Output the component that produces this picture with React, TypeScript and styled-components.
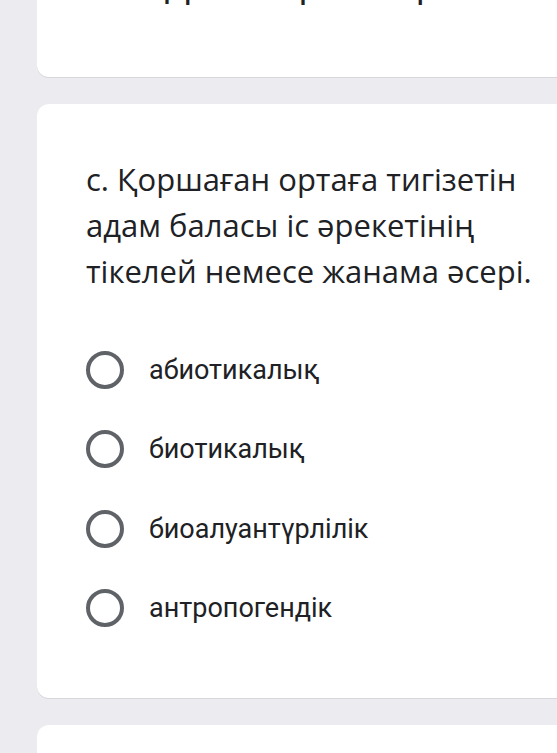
import styled, { createGlobalStyle } from 'styled-components';

const GlobalStyle = createGlobalStyle`
  html, body {
    margin: 0;
    padding: 0;
    background: #ebebf0;
  }
  body {
    font-family: Roboto, "Liberation Sans", sans-serif;
    color: #202124;
  }
`;

const options = ['абиотикалық', 'биотикалық', 'биоалуантүрлілік', 'антропогендік'];

function App() {
  return (
    <>
      <GlobalStyle />
      <Page>
        <PrevCard>
          <PrevText>Қоршаған ортаға әсері</PrevText>
        </PrevCard>
        <Card>
          <Question>
            с. Қоршаған ортаға тигізетін адам баласы іс әрекетінің тікелей немесе жанама әсері.
          </Question>
          <OptionList>
            {options.map((label) => (
              <Option key={label}>
                <Radio />
                <OptionLabel>{label}</OptionLabel>
              </Option>
            ))}
          </OptionList>
        </Card>
        <Card />
      </Page>
    </>
  );
}

const Page = styled.div`
  width: 557px;
  height: 753px;
  overflow: hidden;
  padding-left: 37px;
  box-sizing: border-box;
  display: flex;
  flex-direction: column;
  gap: 27px;
`;

const Card = styled.div`
  flex-shrink: 0;
  width: 540px;
  min-height: 100px;
  background: #fff;
  border-radius: 12px;
  box-shadow: 0 1px 0 #d6d6dc;
  padding: 52px 0 50px 49px;
  box-sizing: border-box;
`;

const PrevCard = styled(Card)`
  min-height: 0;
  margin-top: -40px;
  padding: 0 0 0 113px;
  height: 117px;
  border-radius: 0 0 12px 12px;
  overflow: hidden;
`;

const PrevText = styled.div`
  font-size: 27px;
  font-weight: 500;
  line-height: 28px;
  margin-top: 16px;
`;

const Question = styled.div`
  font-family: "Open Sans", sans-serif;
  font-size: 31px;
  line-height: 46px;
  width: 470px;
  color: #202124;
`;

const OptionList = styled.div`
  display: flex;
  flex-direction: column;
  margin-top: 36px;
`;

const Option = styled.div`
  display: flex;
  align-items: center;
  height: 79.5px;
  gap: 25px;
`;

const Radio = styled.span`
  width: 38px;
  height: 38px;
  border: 4px solid #5f6368;
  border-radius: 50%;
  box-sizing: border-box;
  flex-shrink: 0;
`;

const OptionLabel = styled.span`
  font-size: 27px;
  color: #202124;
`;

export default App;
